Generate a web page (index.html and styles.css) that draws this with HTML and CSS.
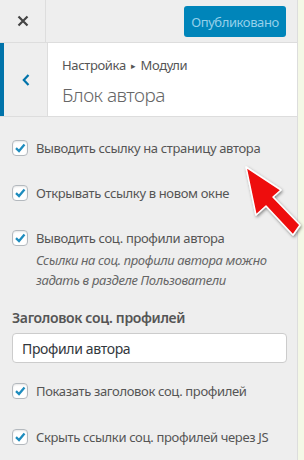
FILE: index.html
```html
<!DOCTYPE html>
<html lang="ru">
<head>
  <meta charset="UTF-8">
  <meta name="viewport" content="width=device-width, initial-scale=1">
  <title>Блок автора</title>
  <link rel="stylesheet" href="styles.css">
</head>
<body>
  <div class="panel">
    <div class="header">
      <div class="close">
        <svg width="12" height="12" viewBox="0 0 12 12"><path d="M1.5 1.5 L10.5 10.5 M10.5 1.5 L1.5 10.5" stroke="#444" stroke-width="2.2" fill="none"/></svg>
      </div>
      <div class="header-right">
        <button class="publish">Опубликовано</button>
      </div>
    </div>

    <div class="section-head">
      <div class="back">
        <svg width="8" height="12" viewBox="0 0 8 12"><path d="M6.5 1 L1.8 6 L6.5 11" stroke="#0073aa" stroke-width="2.2" fill="none"/></svg>
      </div>
      <div class="titles">
        <div class="crumbs">Настройка <span class="tri">&#9656;</span> Модули</div>
        <div class="title">Блок автора</div>
      </div>
    </div>

    <div class="controls">
      <label class="opt opt-1"><span class="box"></span><span>Выводить ссылку на страницу автора</span></label>
      <label class="opt opt-2"><span class="box"></span><span>Открывать ссылку в новом окне</span></label>
      <label class="opt opt-3"><span class="box"></span><span>Выводить соц. профили автора<em class="desc">Ссылки на соц. профили автора можно задать в разделе Пользователи</em></span></label>

      <div class="field-title">Заголовок соц. профилей</div>
      <input class="text" type="text" value="Профили автора">

      <label class="opt opt-4"><span class="box"></span><span>Показать заголовок соц. профилей</span></label>
      <label class="opt opt-5"><span class="box"></span><span>Скрыть ссылки соц. профилей через JS</span></label>
    </div>
  </div>

  <svg class="arrow" width="70" height="90" viewBox="240 160 70 90">
    <defs>
      <filter id="sh" x="-30%" y="-30%" width="160%" height="160%">
        <feDropShadow dx="1" dy="1.5" stdDeviation="1.5" flood-color="#000" flood-opacity="0.45"/>
      </filter>
    </defs>
    <polygon points="246,167 281,190 273,197 300,225 293,235 266,206 256,215" fill="#ee0a0a" stroke="#fff" stroke-width="1.5" stroke-linejoin="round" filter="url(#sh)"/>
  </svg>
</body>
</html>
```

FILE: styles.css
```css
body {
  margin: 0;
  background: #f4f8e6;
  font-family: "Noto Sans", "Open Sans", sans-serif;
  color: #555;
  letter-spacing: -0.35px;
  position: relative;
  height: 460px;
  overflow: hidden;
}

.panel {
  width: 297px;
  height: 460px;
  background: #eee;
  border-right: 1px solid #ddd;
}

.header {
  display: flex;
  height: 42px;
  border-bottom: 1px solid #ddd;
}

.close {
  width: 45px;
  border-right: 1px solid #ddd;
  display: flex;
  align-items: center;
  justify-content: center;
}

.header-right {
  flex: 1;
  display: flex;
  justify-content: flex-end;
  align-items: center;
  padding-right: 11px;
}

.publish {
  width: 102px;
  height: 31px;
  padding: 0;
  border: none;
  border-radius: 3px;
  background: #0085ba;
  color: #94d0ea;
  font-family: inherit;
  font-size: 13px;
  letter-spacing: -0.4px;
  margin-top: 1px;
}

.section-head {
  display: flex;
  height: 73px;
  background: #fff;
  border-bottom: 1px solid #ddd;
}

.back {
  width: 43px;
  background: #eee;
  border-left: 4px solid #0073aa;
  border-right: 1px solid #ddd;
  display: flex;
  align-items: center;
  justify-content: center;
}

.titles {
  padding: 12px 0 0 14px;
}

.crumbs {
  font-size: 13px;
  line-height: 20px;
}

.tri {
  font-size: 9px;
  position: relative;
  top: -1px;
  margin: 0 2px;
}

.title {
  font-size: 19px;
  font-weight: 300;
  line-height: 28px;
  margin-top: 4px;
  letter-spacing: -0.5px;
  color: #666;
}

.controls {
  padding: 21px 12px 0 12px;
}

.opt {
  display: flex;
  gap: 8px;
  font-size: 13px;
  line-height: 20px;
}

.box {
  flex: none;
  width: 14px;
  height: 14px;
  margin-top: 2px;
  background: #fff url("data:image/svg+xml;utf8,<svg xmlns='http://www.w3.org/2000/svg' width='14' height='14' viewBox='0 0 14 14'><path d='M3 7.2 L6 10 L11.5 3.5' stroke='%231e8cbe' stroke-width='2.3' fill='none'/></svg>") no-repeat center;
  border: 1px solid #b4b9be;
  border-radius: 4px;
  box-shadow: inset 0 1px 2px rgba(0,0,0,0.1);
}

.opt-2 { margin-top: 25px; }
.opt-3 { margin-top: 25px; }
.opt-4 { margin-top: 18px; }
.opt-5 { margin-top: 26px; }

.desc {
  display: block;
  font-style: italic;
  line-height: 20px;
  margin-top: 2px;
  color: #666;
}

.field-title {
  font-size: 14px;
  font-weight: 600;
  line-height: 20px;
  margin-top: 18px;
}

.text {
  display: block;
  box-sizing: border-box;
  width: 275px;
  height: 30px;
  margin-top: 5px;
  padding: 0 9px;
  border: 1px solid #ccc;
  border-radius: 4px;
  font-family: inherit;
  font-size: 14px;
  letter-spacing: -0.35px;
  color: #32373c;
  background: #fff;
}

.arrow {
  position: absolute;
  left: 240px;
  top: 160px;
}
```
